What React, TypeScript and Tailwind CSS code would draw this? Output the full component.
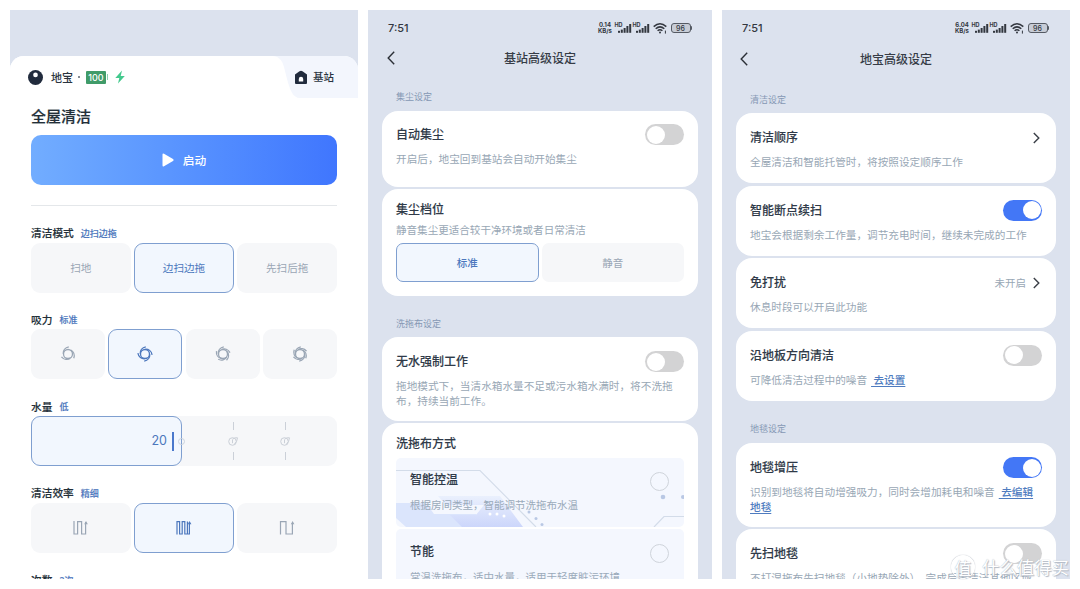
import type { ReactNode } from 'react';

function SignalBars() {
  return (
    <div className="flex h-[11px] w-4 items-start">
      <span className="-mr-[5px] text-[5.5px] leading-[5px] font-bold">HD</span>
      <svg viewBox="0 0 14 11" className="h-[11px] w-[14px] shrink-0" fill="currentColor">
        <rect x="0" y="7.8" width="2" height="2" />
        <rect x="2.8" y="6.6" width="2" height="3.2" />
        <rect x="5.6" y="5" width="2" height="4.8" />
        <rect x="8.4" y="3" width="2" height="6.8" />
        <rect x="11.2" y="1" width="2" height="8.8" />
      </svg>
    </div>
  );
}

function StatusBar({ speed, className }: { speed: string; className: string }) {
  return (
    <div className={`flex h-4 items-center justify-between text-[#33373f] ${className}`}>
      <span className="font-[Inter,sans-serif] text-[11px] leading-4 font-medium">7:51</span>
      <div className="flex items-center font-[Inter,sans-serif]">
        <div className="mr-px w-[17px] text-center text-[6px] leading-[6px] font-bold">
          <div>{speed}</div>
          <div>KB/s</div>
        </div>
        <div className="flex gap-[2px]">
          <SignalBars />
          <SignalBars />
        </div>
        <svg viewBox="0 0 14 12" className="ml-1 h-3 w-3.5" fill="none" stroke="currentColor" strokeWidth="1.5">
          <path d="M.7 4.6Q7-1 13.3 4.6" />
          <path d="M2.7 6.8Q7 2.9 11.3 6.8" />
          <path d="M4.6 8.8Q7 6.7 9.4 8.8" />
          <circle cx="7" cy="10.4" r="1" fill="currentColor" stroke="none" />
          <path d="M12.4 8.6v3" strokeWidth="1" />
        </svg>
        <div className="ml-1 flex items-center">
          <div className="flex h-[10px] w-[20px] items-center justify-center rounded-[3px] border border-[#555a63] bg-[#c7ccd6] text-[7px] leading-none font-medium">
            96
          </div>
          <div className="h-1 w-[1.5px] rounded-r bg-[#555a63]" />
        </div>
      </div>
    </div>
  );
}

function NavBar({ title, className }: { title: string; className: string }) {
  return (
    <div className={`flex h-5 items-center ${className}`}>
      <svg viewBox="0 0 8 14" className="h-[14px] w-2 shrink-0" fill="none" stroke="#2b2f36" strokeWidth="1.4">
        <path d="M7.2.8 1.2 7l6 6.2" />
      </svg>
      <h1 className="mr-2 flex-1 text-center text-[12px] leading-5 font-medium text-[#363c46]">{title}</h1>
    </div>
  );
}

function Toggle({ on = false }: { on?: boolean }) {
  return (
    <div
      className={`flex h-[21px] w-[39px] shrink-0 items-center rounded-full p-[1.5px] ${
        on ? 'justify-end bg-[#4377f6]' : 'justify-start bg-[#d3d3d4]'
      }`}
    >
      <div className="size-[18px] rounded-full bg-white" />
    </div>
  );
}

function Chevron() {
  return (
    <svg viewBox="0 0 7 12" className="mr-[2px] h-3 w-[7px]" fill="none" stroke="#3a3f47" strokeWidth="1.4">
      <path d="m.8 1 5 5-5 5" />
    </svg>
  );
}

function Label({ children, className }: { children: ReactNode; className: string }) {
  return <div className={`text-[9px] leading-3 text-[#8598b4] ${className}`}>{children}</div>;
}

function CardTitle({ title, right }: { title: string; right?: ReactNode }) {
  return (
    <div className="flex h-[21px] items-center justify-between">
      <h2 className="pb-px text-[12px] leading-[20px] font-medium text-[#2f3a48] [-webkit-text-stroke:0.1px]">
        {title}
      </h2>
      {right}
    </div>
  );
}

function SettingCard({
  title,
  right,
  children,
  className,
}: {
  title: string;
  right?: ReactNode;
  children: ReactNode;
  className: string;
}) {
  return (
    <section className={`shrink-0 rounded-[16px] bg-white px-[14px] ${className}`}>
      <CardTitle title={title} right={right} />
      <p className="mt-[7px] text-[10.65px] leading-[14.5px] whitespace-nowrap text-[#98a7b5]">{children}</p>
    </section>
  );
}

function Link({ children }: { children: ReactNode }) {
  return <span className="font-medium whitespace-pre text-[#4f7cc0] underline underline-offset-2">{children}</span>;
}

const idle = 'border border-transparent bg-[#f6f7f9] text-[#9aa6b5]';
const picked = 'border border-[#7f9fd0] bg-[#f2f7fe] text-[#4c77bd]';

function Choice({ active = false, children }: { active?: boolean; children: ReactNode }) {
  return (
    <div
      className={`flex h-[50px] flex-1 items-center justify-center rounded-[9px] text-[10.6px] ${
        active ? picked : idle
      }`}
    >
      {children}
    </div>
  );
}

function Field({ name, value, children }: { name: string; value: string; children?: ReactNode }) {
  return (
    <div className="h-[86.75px] shrink-0">
      <div className="flex h-[17px] items-center gap-[7px] leading-[17px]">
        <span className="pb-px text-[10.7px] font-medium text-[#232f38] [-webkit-text-stroke:0.15px]">{name}</span>
        <span className="text-[9px] font-medium text-[#4c77bd] [-webkit-text-stroke:0.15px]">{value}</span>
      </div>
      <div className="mt-px flex gap-[3.5px]">{children}</div>
    </div>
  );
}

function Swirl({ blades }: { blades: number }) {
  const angles = Array.from({ length: blades }, (_, i) => (360 / blades) * i);
  return (
    <svg viewBox="0 0 18 18" className="size-[18px]" fill="none" stroke="currentColor">
      <circle cx="9" cy="9" r="4.500" strokeWidth="1.300" />
      {angles.map((a) => (
        <path key={a} d="M4.200 8.600C4 5.600 6 2.600 9.800 1.900" strokeWidth="1.300" transform={`rotate(${a} 9 9)`} />
      ))}
    </svg>
  );
}

function Route({ d, tip }: { d: string; tip: number }) {
  return (
    <svg viewBox="0 0 16 16" className="size-4" fill="none" stroke="currentColor" strokeWidth="1.2">
      <path d={d} />
      <path d={`M${tip - 1.8} 4.2 ${tip} 1l1.8 3.2z`} fill="currentColor" stroke="none" />
    </svg>
  );
}

function WaterTick() {
  return (
    <div className="flex h-[38px] w-3 flex-col items-center justify-between text-[#cbd0d8]">
      <div className="h-2 w-px bg-current" />
      <svg viewBox="0 0 12 10" className="h-[10px] w-3" fill="none" stroke="currentColor">
        <circle cx="5.5" cy="5.5" r="3.8" />
        <path d="M5.500 3.200q3-2.200 5-1.400-.2 4-3.200 6.400" />
        <path d="M5.500 3.600v3.600" />
      </svg>
      <div className="h-2 w-px bg-current" />
    </div>
  );
}

function CleaningPanel() {
  return (
    <div className="flex h-[569px] w-[348px] flex-col overflow-hidden bg-[#dce2ee] pt-[46px]">
      <div className="flex h-[523px] flex-col rounded-t-[14px] bg-white">
        <div className="flex h-[42px] shrink-0 rounded-t-[14px] bg-[#f3f6fd]">
          <div className="flex w-[262px] items-center rounded-tl-[14px] bg-white pl-[18px]">
            <svg viewBox="0 0 16 16" className="size-[15px]">
              <circle cx="8" cy="8" r="8" fill="#212b3d" />
              <circle cx="8" cy="5.200" r="2.500" fill="#fff" />
            </svg>
            <span className="ml-2 pb-px text-[11px] leading-5 font-medium text-[#2a3440]">地宝</span>
            <span className="ml-[5px] size-[2px] rounded-full bg-[#5b6470]" />
            <span className="ml-[6px] flex h-[13px] w-5 items-center justify-center rounded-[1px] bg-[#409b69] font-[Inter,sans-serif] text-[9px] leading-none font-medium text-white">
              100
            </span>
            <span className="ml-px h-1.5 w-px bg-[#8fd0ae]" />
            <svg viewBox="0 0 10 14" className="ml-[7px] h-[14px] w-[10px]" fill="#43c98d">
              <path d="M7 .4.3 8h4L3 13.6 9.8 6H5.7z" />
            </svg>
          </div>
          <svg viewBox="0 0 28 42" className="h-[42px] w-[28px] shrink-0" fill="#fff">
            <path d="M0 0c7 0 10 4 12 11l3 12c3 11 6 19 13 19H0z" />
          </svg>
          <div className="-ml-[6px] flex items-center">
            <svg viewBox="0 0 14 15" className="h-[15px] w-[14px]">
              <path d="M1 4.500 5.500 1.200q1.500-1 3 0L13 4.500V13q0 1-1 1H2q-1 0-1-1z" fill="#212b3d" />
              <path d="M4.800 11.500V9a2.200 2.200 0 0 1 4.400 0v2.500z" fill="#fff" />
            </svg>
            <span className="ml-[5px] pb-px text-[10.5px] leading-5 font-medium text-[#2a3440]">基站</span>
          </div>
        </div>

        <div className="flex flex-col px-[21px]">
          <h1 className="mt-[7px] text-[15px] leading-[22px] font-medium text-[#232f38] [-webkit-text-stroke:0.2px]">
            全屋清洁
          </h1>
          <button className="mt-2 flex h-[50px] items-center justify-center gap-[9px] rounded-[10px] bg-linear-to-r from-[#72adff] to-[#4076fe] text-[11.7px] font-medium text-white">
            <svg viewBox="0 0 12 14" className="h-[14px] w-3" fill="#fff">
              <path d="M.5 1.800Q.5 0 2 .8l9 5.200q1.200 1 0 2l-9 5.200Q.5 14 .5 12.200z" />
            </svg>
            启动
          </button>
          <div className="mt-[19.5px] mb-[19px] h-px shrink-0 bg-[#e4e7ea]" />

          <Field name="清洁模式" value="边扫边拖">
            <Choice>扫地</Choice>
            <Choice active>边扫边拖</Choice>
            <Choice>先扫后拖</Choice>
          </Field>
          <Field name="吸力" value="标准">
            <Choice>
              <Swirl blades={3} />
            </Choice>
            <Choice active>
              <Swirl blades={4} />
            </Choice>
            <Choice>
              <Swirl blades={5} />
            </Choice>
            <Choice>
              <Swirl blades={6} />
            </Choice>
          </Field>
          <Field name="水量" value="低">
            <div className="flex h-[50px] flex-1 items-center rounded-[9px] bg-[#f6f7f9]">
              <div className={`flex h-[50px] w-[151px] items-center justify-end rounded-[9px] pr-[7px] ${picked}`}>
                <span className="font-[Inter,sans-serif] text-[12.5px]">20</span>
                <span className="ml-[5px] h-[19px] w-[2px] bg-[#4a78cc]" />
              </div>
              <span className="-ml-1 size-[7px] rounded-full border border-[#cbd3de]" />
              <div className="ml-[42px] flex gap-10">
                <WaterTick />
                <WaterTick />
              </div>
            </div>
          </Field>
          <Field name="清洁效率" value="精细">
            <Choice>
              <Route d="M1 1v13h3.600V1.600h4V14h4V2" tip={13} />
            </Choice>
            <Choice active>
              <Route d="M1 14.500V1.600h2.600V14h2.600V1.600h2.600V14h2.600V1.600M11.400 14h2V2" tip={13.6} />
            </Choice>
            <Choice>
              <Route d="M1.500 14.500V1.600h5.500V14h6.400V3" tip={13.6} />
            </Choice>
          </Field>
          <Field name="次数" value="2次" />
        </div>
      </div>
    </div>
  );
}

function Radio() {
  return <div className="size-[19px] shrink-0 rounded-full border-[1.5px] border-[#cfd4db]" />;
}

function ModeText({ title, desc }: { title: string; desc: string }) {
  return (
    <div>
      <div className="text-[12px] leading-5 font-medium text-[#2f3a48] [-webkit-text-stroke:0.1px]">{title}</div>
      <div className="mt-[8px] text-[10.5px] leading-4 whitespace-nowrap text-[#9aaaba]">{desc}</div>
    </div>
  );
}

function StationPanel() {
  return (
    <div className="flex h-[569px] w-[344px] flex-col overflow-hidden bg-[#dce2ee]">
      <StatusBar speed="0.14" className="mt-[10px] mr-5 ml-[20px]" />
      <NavBar title="基站高级设定" className="mt-3 mr-[19px] ml-[19px]" />
      <Label className="mt-[23px] ml-7">集尘设定</Label>
      <div className="mt-2 flex flex-col gap-[2px] px-[14px]">
        <SettingCard title="自动集尘" right={<Toggle />} className="h-[76px] pt-[13px]">
          开启后，地宝回到基站会自动开始集尘
        </SettingCard>
        <section className="h-[107px] shrink-0 rounded-[16px] bg-white px-[14px] pt-[10px]">
          <CardTitle title="集尘档位" />
          <p className="mt-[2px] text-[10.55px] leading-4 text-[#98a7b5]">静音集尘更适合较干净环境或者日常清洁</p>
          <div className="mt-[5px] flex gap-[3px] text-[10.5px]">
            <div className={`flex h-[39px] flex-1 items-center justify-center rounded-[7px] font-medium ${picked}`}>
              标准
            </div>
            <div className={`flex h-[39px] flex-1 items-center justify-center rounded-[7px] ${idle}`}>静音</div>
          </div>
        </section>
      </div>
      <Label className="mt-[22px] ml-7">洗拖布设定</Label>
      <div className="mt-[7px] flex flex-col gap-[2px] px-[14px]">
        <SettingCard title="无水强制工作" right={<Toggle />} className="h-[84px] pt-[14px]">
          拖地模式下，当清水箱水量不足或污水箱水满时，将不洗拖
          <br />
          布，持续当前工作。
        </SettingCard>
        <section className="h-[220px] shrink-0 rounded-t-[16px] bg-white px-[14px] pt-[10px]">
          <CardTitle title="洗拖布方式" />
          <div className="relative mt-1 h-[69px] overflow-hidden rounded-[5px] bg-[#f4f7fe]">
            <svg viewBox="0 0 288 69" className="absolute inset-0 h-full w-full" fill="none">
              <defs>
                <linearGradient id="haze" x1="0" y1="0" x2="0" y2="1">
                  <stop offset="0" stopColor="#eaf0fd" />
                  <stop offset="1" stopColor="#ccd6fb" />
                </linearGradient>
              </defs>
              <path d="M0 45h30l8 11h42l12 13H10L0 60z" fill="#dbe5fc" />
              <path d="M42 38h62l23 31H66L54 57h26l8-10H50z" fill="url(#haze)" />
              <path d="M0 12.500h84l56 56.500" stroke="#d3dce9" strokeWidth="1.200" />
              <path d="M258 69l10-10.500h20" stroke="#d3dce9" strokeWidth="1.200" />
              <g fill="#b9c8e4">
                <circle cx="267" cy="39" r="2.300" />
                <circle cx="287" cy="39" r="2" />
                <circle cx="133" cy="54" r="1.500" />
                <circle cx="140" cy="60.500" r="1.500" />
                <circle cx="146" cy="66.500" r="1.500" />
              </g>
              <g fill="#fff">
                <circle cx="94" cy="56" r="1.500" />
                <circle cx="101" cy="56" r="1.500" />
                <circle cx="108" cy="58" r="1.500" />
              </g>
            </svg>
            <div className="relative flex justify-between pt-[11px] pr-[15px] pl-[14px]">
              <ModeText title="智能控温" desc="根据房间类型，智能调节洗拖布水温" />
              <div className="pt-[3px]">
                <Radio />
              </div>
            </div>
          </div>
          <div className="mt-[2px] flex h-[69px] justify-between rounded-[5px] bg-[#f4f7fe] pt-[12px] pr-[15px] pl-[14px]">
            <ModeText title="节能" desc="常温洗拖布，适中水量，适用于轻度脏污环境" />
            <div className="pt-[3px]">
              <Radio />
            </div>
          </div>
        </section>
      </div>
    </div>
  );
}

function RobotPanel() {
  return (
    <div className="flex h-[569px] w-[348px] flex-col overflow-hidden bg-[#dce2ee]">
      <StatusBar speed="6.04" className="mt-[10px] mr-[21px] ml-[20px]" />
      <NavBar title="地宝高级设定" className="mt-[13px] mr-[18px] ml-[18px]" />
      <Label className="mt-[25px] ml-7">清洁设定</Label>
      <div className="mt-[7px] flex flex-col gap-[2.3px] px-[14px]">
        <SettingCard title="清洁顺序" right={<Chevron />} className="h-[70.3px] pt-[14px]">
          全屋清洁和智能托管时，将按照设定顺序工作
        </SettingCard>
        <SettingCard title="智能断点续扫" right={<Toggle on />} className="h-[70.3px] pt-[14px]">
          地宝会根据剩余工作量，调节充电时间，继续未完成的工作
        </SettingCard>
        <SettingCard
          title="免打扰"
          right={
            <div className="flex items-center gap-[7px] text-[10.5px] text-[#98a7b5]">
              未开启
              <Chevron />
            </div>
          }
          className="h-[70.3px] pt-[14px]"
        >
          休息时段可以开启此功能
        </SettingCard>
        <SettingCard title="沿地板方向清洁" right={<Toggle />} className="h-[70.3px] pt-[14px]">
          可降低清洁过程中的噪音
          <span className="ml-1">
            <Link> 去设置</Link>
          </span>
        </SettingCard>
      </div>
      <Label className="mt-[22px] ml-7">地毯设定</Label>
      <div className="mt-[8px] flex flex-col gap-[2px] px-[14px]">
        <SettingCard title="地毯增压" right={<Toggle on />} className="h-[84px] pt-[14px]">
          识别到地毯将自动增强吸力，同时会增加耗电和噪音
          <span className="ml-1">
            <Link> 去编辑</Link>
          </span>
          <br />
          <Link>地毯</Link>
        </SettingCard>
        <SettingCard title="先扫地毯" right={<Toggle />} className="h-[84px] pt-[14px]">
          不打湿拖布先扫地毯（小地垫除外），完成后再清洁其他区域
        </SettingCard>
      </div>
    </div>
  );
}

export default function App() {
  return (
    <main className="relative flex h-[589px] w-[1080px] gap-[10px] overflow-hidden bg-white p-[10px] font-['Noto_Sans_CJK_SC',sans-serif]">
      <CleaningPanel />
      <StationPanel />
      <RobotPanel />
      <div className="absolute top-[555px] left-[951px] flex items-center gap-[7px] text-white [text-shadow:0_0_1px_#a3abb8,1px_1px_1px_#b4bbc6]">
        <span className="flex size-6 items-center justify-center rounded-full border border-white text-[17px] leading-none shadow-[0_0_1px_#8c95a3]">
          值
        </span>
        <span className="text-[17.4px] leading-6 whitespace-nowrap">什么值得买</span>
      </div>
    </main>
  );
}
